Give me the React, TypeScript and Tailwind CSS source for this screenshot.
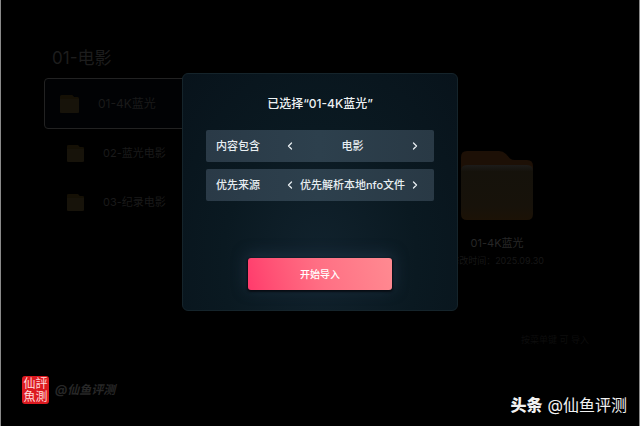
import React from "react";

const FONT = "font-['Inter','Noto_Sans_CJK_SC',sans-serif]";

function SmallFolder({ className }: { className: string }) {
  return (
    <svg viewBox="0 0 20 18" className={className} aria-hidden="true" preserveAspectRatio="none">
      <path d="M0 1.5Q0 0 1.5 0H13L15 2H18.5Q20 2 20 3.5V16.5Q20 18 18.5 18H1.5Q0 18 0 16.5Z" fill="#151005" />
      <path d="M0 4H20V16.5Q20 18 18.5 18H1.5Q0 18 0 16.5Z" fill="#17130a" />
    </svg>
  );
}

function BigFolder() {
  return (
    <svg viewBox="0 0 72 69" className="h-[69px] w-[72px]" aria-hidden="true">
      <defs>
        <linearGradient id="front" x1="0" y1="0" x2="0" y2="1">
          <stop offset="0" stopColor="#1d1c1a" />
          <stop offset="0.12" stopColor="#15120b" />
          <stop offset="0.75" stopColor="#17120a" />
          <stop offset="1" stopColor="#1c1206" />
        </linearGradient>
      </defs>
      <path d="M0 6Q0 0 6 0H38Q42 0 45 3L49 7.5Q51 9 54 9H66Q72 9 72 15V40H0Z" fill="#1d1006" />
      <path d="M0 20Q0 14 6 14H66Q72 14 72 20V63Q72 69 66 69H6Q0 69 0 63Z" fill="url(#front)" />
    </svg>
  );
}

function Chevron({ d }: { d: string }) {
  return (
    <svg viewBox="0 0 8 10" className="h-[10px] w-[8px]" fill="none" stroke="#e8eef2" strokeWidth="1.3" strokeLinecap="round" strokeLinejoin="round" aria-hidden="true">
      <path d={d} />
    </svg>
  );
}

function OptionRow({ label, value }: { label: string; value: string }) {
  return (
    <div role="group" aria-label={label} className="flex h-8 items-center rounded-[2px] bg-linear-to-r from-[#2a3a47] via-[#2d404d] to-[#293945] pr-[15px] pl-[10px] text-[11px] font-medium text-[#e8eef2]">
      <span className="w-[70px]">{label}</span>
      <button type="button" aria-label={label + " 上一项"} className="flex"><Chevron d="M5.5 2L2.5 5L5.5 8" /></button>
      <span className="flex-1 text-center whitespace-nowrap">{value}</span>
      <button type="button" aria-label={label + " 下一项"} className="flex"><Chevron d="M2.5 2L5.5 5L2.5 8" /></button>
    </div>
  );
}

export default function App() {
  return (
    <div className={"relative flex min-h-screen flex-col border-x border-[#8a8a8a] bg-black " + FONT}>
      <main className="flex flex-1 items-start justify-between pt-[46px] pr-[95px] pl-[43px]">
        <nav className="w-[190px]">
          <h1 className="pl-2 text-[17px] leading-[24px] text-[#1d1d1d]">01-电影</h1>
          <ul className="mt-2">
            <li>
              <button type="button" className="flex h-[51px] w-full items-center gap-[19px] rounded-[4px] border border-[#222222] bg-[#010204] pl-[15px] text-[12px] text-[#1a1a1a]">
                <SmallFolder className="h-[18px] w-[19px]" />
                01-4K蓝光
              </button>
            </li>
            <li>
              <button type="button" className="flex h-[49px] w-full items-center gap-[19px] pl-[23px] text-[11px] text-[#1a1a1a]">
                <SmallFolder className="h-[17px] w-[17px]" />
                02-蓝光电影
              </button>
            </li>
            <li>
              <button type="button" className="flex h-[49px] w-full items-center gap-[19px] pl-[23px] text-[11px] text-[#1a1a1a]">
                <SmallFolder className="h-[17px] w-[17px]" />
                03-纪录电影
              </button>
            </li>
          </ul>
        </nav>
        <section className="flex flex-col items-center pt-[105px]">
          <BigFolder />
          <h2 className="mt-[14px] text-[11px] leading-[18px] text-[#272727]">01-4K蓝光</h2>
          <p className="text-[9px] leading-[18px] text-[#171717]">修改时间：2025.09.30</p>
        </section>
      </main>
      <p className="pr-[50px] pb-[78px] text-right text-[9px] leading-[16px] text-[#0d0d0d]">按菜单键 可 导入</p>

      <div role="dialog" aria-labelledby="dialog-title" className="absolute top-[73px] left-1/2 flex h-[238px] w-[276px] -translate-x-1/2 flex-col items-center rounded-[6px] border border-[#15242b] bg-radial-[at_50%_80%] from-[#11222d] via-[#0a1921] to-[#08131b] px-[23px] pt-[20px]">
        <h2 id="dialog-title" className="text-[12px] leading-[20px] font-medium text-[#eef2f4]">已选择“01-4K蓝光”</h2>
        <div className="mt-4 flex w-full flex-col gap-[7px]">
          <OptionRow label="内容包含" value="电影" />
          <OptionRow label="优先来源" value="优先解析本地nfo文件" />
        </div>
        <button type="button" className="mt-[57px] h-8 w-[144px] rounded-[3px] bg-linear-75 from-[#ff3a6c] via-[#ff6f84] to-[#ff8a91] text-[10px] font-medium text-white shadow-[0_1px_2px_1px_#080d14,0_-2px_14px_2px_#1a2d3d]">开始导入</button>
      </div>

      <div className="absolute bottom-[22px] left-[21px] flex items-center gap-[6px]">
        <div className="h-[28px] w-[27px] rounded-[3px] bg-[#dc1a20] px-px pt-px text-center text-[12px] leading-[13px] break-all text-[#ffd9d9]">
          仙評魚測
        </div>
        <span className="text-[12px] font-bold text-[#272727] italic">@仙鱼评测</span>
      </div>
      <div className="absolute right-[12px] bottom-[9px] flex items-center gap-[5px] text-[16px] leading-[24px] text-[#f2f2f2]">
        <strong className="font-black">头条</strong>
        <span>@仙鱼评测</span>
      </div>
    </div>
  );
}
